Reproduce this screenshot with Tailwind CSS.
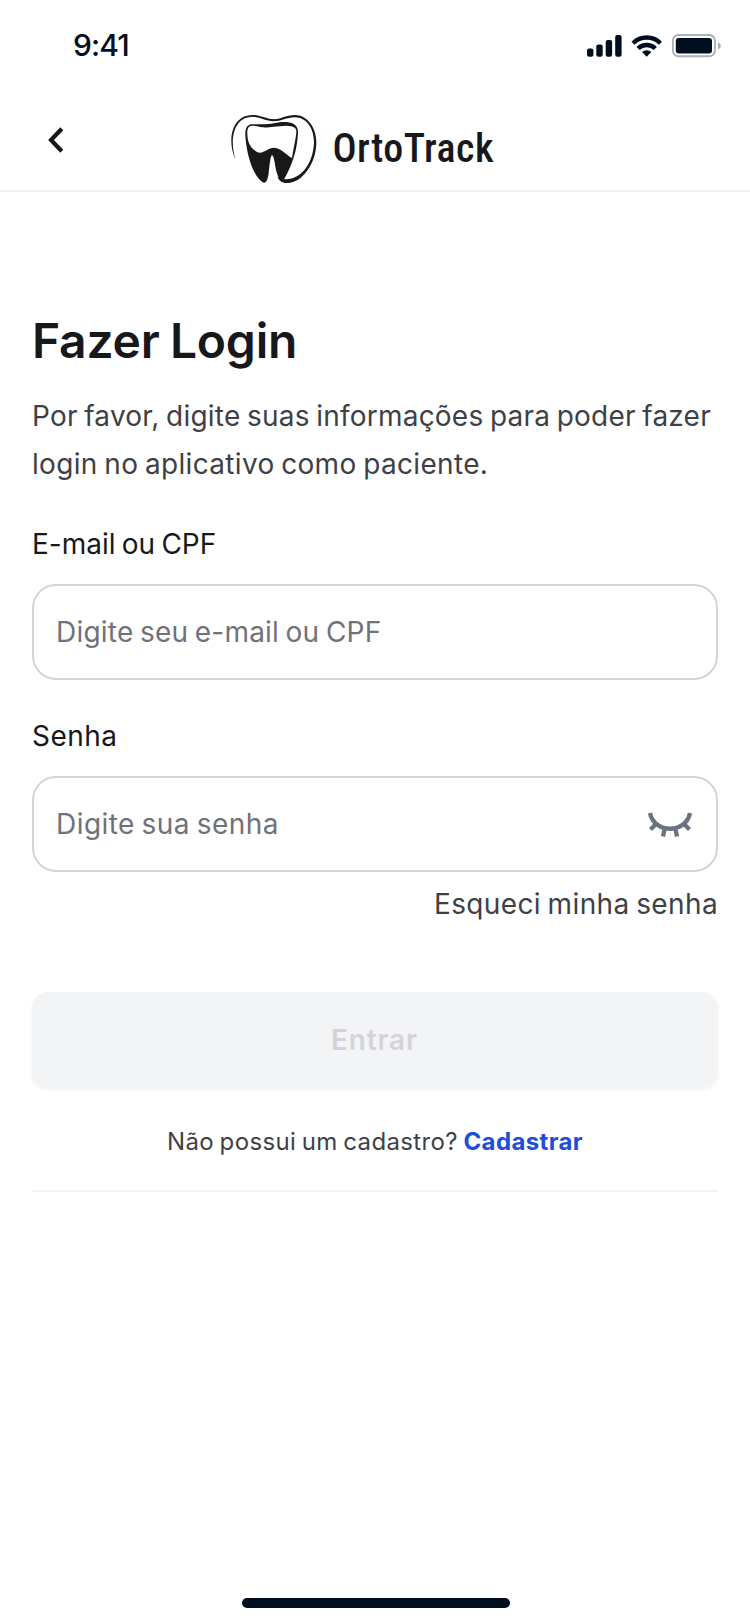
<!DOCTYPE html>
<html lang="pt-BR">
<head>
<meta charset="utf-8">
<title>OrtoTrack</title>
<script src="https://cdn.jsdelivr.net/npm/@tailwindcss/browser@4"></script>
</head>
<body class="bg-white">
<main class="w-[750px] h-[1624px] flex flex-col overflow-hidden font-[Inter,sans-serif] text-[28px] text-[#3f3f46]">
  <div class="h-[92px] shrink-0 flex items-start justify-between pl-[73px] text-[#010e20]">
    <span class="mt-[25px] text-[30px] leading-[40px] font-medium tracking-[-0.9px]">9:41</span>
    <svg class="mt-[20px] w-[190px] h-[60px]" viewBox="0 0 190 60" fill="currentColor">
      <rect x="27" y="28.5" width="6.4" height="8.2" rx="2"/><rect x="36.3" y="24.5" width="6.4" height="12.2" rx="2"/><rect x="45.7" y="20" width="6.4" height="16.7" rx="2"/><rect x="55.2" y="15" width="6.4" height="21.7" rx="2"/>
      <g fill="none" stroke="currentColor" stroke-width="4.4"><path d="M73 23.2a19.3 19.3 0 0 1 27.4 0"/><path d="M78.1 28.5a12.2 12.2 0 0 1 17.2 0"/></g>
      <path d="M86.7 36.7 82 32.1a7 7 0 0 1 9.4 0Z"/>
      <rect x="112.9" y="15" width="42" height="21.3" rx="5.5" fill="none" stroke="#abb0b9" stroke-width="1.9"/>
      <rect x="115.8" y="17.9" width="36.2" height="15.6" rx="3"/>
      <path d="M158 22.2q2.8 1.2 2.8 3.8t-2.8 3.8Z" fill="#abb0b9"/>
    </svg>
  </div>
  <header class="h-[100px] shrink-0 flex border-b-2 border-[#f3f3f4] text-[#18181b]">
    <svg class="ml-[43px] mt-[32px] w-8 h-8" viewBox="0 0 32 32" fill="none" stroke="currentColor" stroke-width="4.2"><path d="M18.800 4.800 8 16 18.800 27.200"/></svg>
    <svg class="ml-[145px] mt-[13px] w-[110px] h-[85px]" viewBox="0 0 330 255" fill="currentColor">
      <path d="M44 158C24 112 30 31 98 30C125 31 140 43 163 43C185 42 198 30 225 30C262 30 289 68 289 112C289 178 244 234 204 234C188 234 178 229 172 215L194 223C244 226 280 174 282 112C282 70 260 37 224 37C200 37 184 49 160 49C138 48 120 36 98 35C36 36 30 112 46 161Z"/>
      <path fill-rule="evenodd" d="M95 58C115 57 140 60 165 54C185 50 234 44 234 80C233 130 217 180 192 223C196 230 196 232 192 232C174 226 168 200 164 172C161 158 160 152 156 151C151 153 149 180 146 205C143 224 140 234 131 233C107 222 87 174 79 120C74 85 73 60 95 58ZM98 62C80 61 80 80 84 106C90 130 108 142 120 143C135 142 145 128 162 128C187 131 196 148 216 159C221 125 228 100 229 80C230 67 218 63 200 62C165 63 150 68 128 67C116 66 108 62 98 62Z"/>
    </svg>
    <span class="ml-[2.5px] mt-[33px] text-[40px] leading-[48px] font-medium font-[Roboto] tracking-[0.45px] [font-stretch:75%]">OrtoTrack</span>
  </header>
  <section class="px-8 flex flex-col pt-[121px]">
    <h1 class="text-[48px] leading-[56px] font-semibold tracking-[-0.2px] [word-spacing:-1.6px] text-[#18181b]">Fazer Login</h1>
    <p class="mt-[23px] leading-[48px] whitespace-nowrap [word-spacing:-1.6px] tracking-[0.22px]">Por favor, digite suas informações para poder fazer<br><span class="tracking-[0.33px]">login no aplicativo como paciente.</span></p>
    <label class="mt-9 leading-[40px] [word-spacing:-1.6px] text-[#18181b]">E-mail ou CPF</label>
    <div class="mt-5 h-24 border-2 border-[#d1d5db] rounded-3xl px-[22px] flex items-center [word-spacing:-1.6px] tracking-[0.22px] text-[#71717a]">Digite seu e-mail ou CPF</div>
    <label class="mt-9 leading-[40px] tracking-[0.45px] text-[#18181b]">Senha</label>
    <div class="mt-5 h-24 border-2 border-[#d1d5db] rounded-3xl px-[22px] flex items-center justify-between [word-spacing:-1.6px] tracking-[0.45px] text-[#71717a]">Digite sua senha
      <svg class="w-12 h-12" viewBox="0 0 48 48" fill="none" stroke="#6b7280" stroke-width="4.3"><path d="M4 13C8 34 40 34 44 13M10 24 4.500 29.500M18.500 29.500 17 36.500M29.500 29.500 31 36.500M38 24 43.500 29.500"/></svg>
    </div>
    <div class="mt-3 leading-[40px] text-right [word-spacing:-1.6px] tracking-[0.37px]">Esqueci minha senha</div>
    <div class="mt-[68px] h-24 rounded-2xl bg-[#f3f4f6] shadow-[0_2px_4px_rgba(0,0,0,0.05)] flex items-center justify-center pr-px font-semibold tracking-[0.8px] text-[#d4d4d8]">Entrar</div>
    <div class="mt-[38px] text-[24px] leading-[32px] text-center whitespace-nowrap [word-spacing:-1.6px] tracking-[0.37px]">Não possui um cadastro? <span class="font-bold text-[#1d4ed8]">Cadastrar</span></div>
    <div class="mt-[32px] h-[2px] bg-[#f3f4f6]"></div>
  </section>
  <div class="mt-auto mb-4 ml-[242px] w-[268px] h-[10px] rounded-full bg-[#010e20]"></div>
</main>
</body>
</html>
